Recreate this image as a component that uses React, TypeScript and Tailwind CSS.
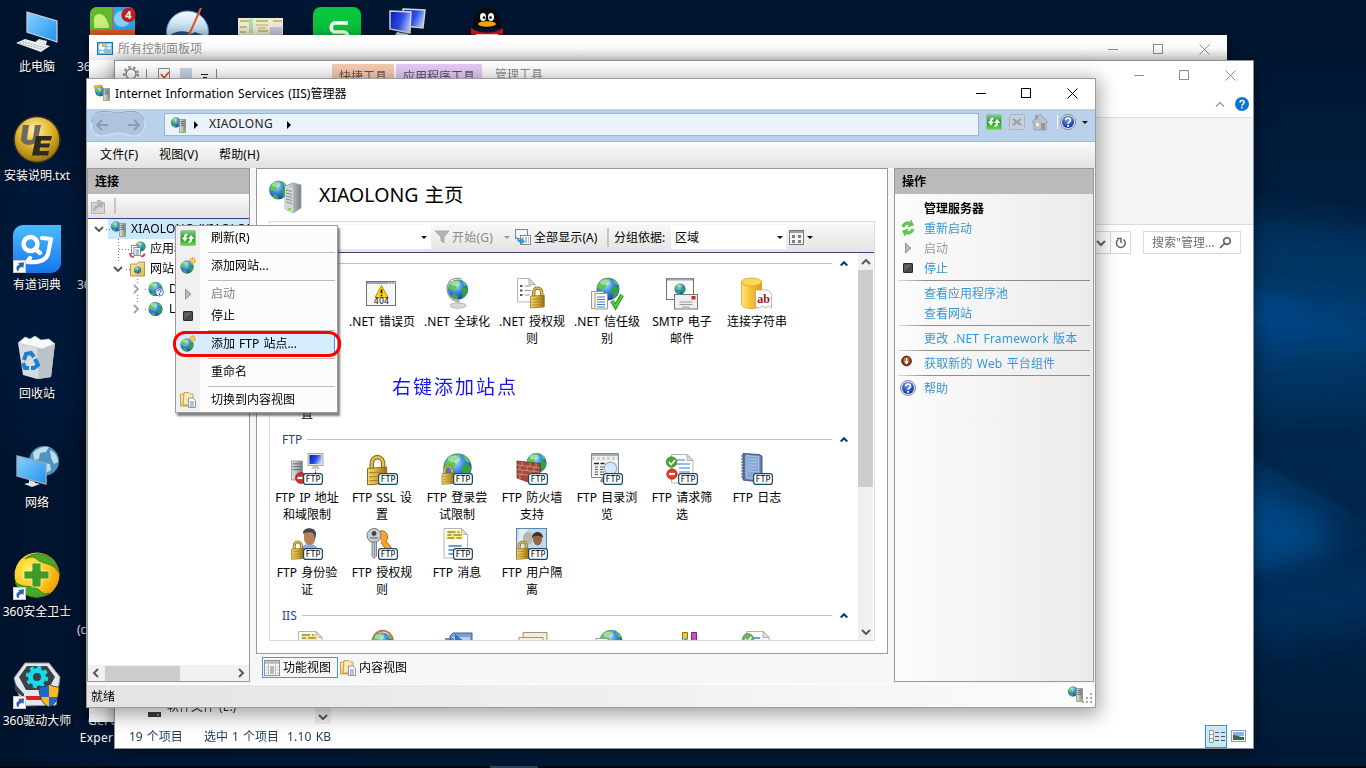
import type { ReactNode } from "react";

type Kids = { children?: ReactNode };

/* ---------- shared gradients ---------- */
function Defs() {
  return (
    <svg className="absolute" width="0" height="0">
      <defs>
        <radialGradient id="sea" cx="0.4" cy="0.3" r="0.75">
          <stop offset="0" stopColor="#b4e2ff" />
          <stop offset="0.45" stopColor="#3b8ce0" />
          <stop offset="1" stopColor="#0f3a9c" />
        </radialGradient>
        <linearGradient id="steel" x1="0" x2="1">
          <stop offset="0" stopColor="#e4e6e8" />
          <stop offset="0.5" stopColor="#b4b8bc" />
          <stop offset="1" stopColor="#7d8287" />
        </linearGradient>
        <linearGradient id="gold" x1="0" x2="1">
          <stop offset="0" stopColor="#f5dc7c" />
          <stop offset="0.5" stopColor="#d8ac3a" />
          <stop offset="1" stopColor="#8f6a14" />
        </linearGradient>
        <linearGradient id="amber" x1="0" x2="1">
          <stop offset="0" stopColor="#ffe07a" />
          <stop offset="0.5" stopColor="#f8c02c" />
          <stop offset="1" stopColor="#e89a10" />
        </linearGradient>
        <linearGradient id="screen" x1="0" x2="1" y1="0" y2="1">
          <stop offset="0" stopColor="#8ad0ff" />
          <stop offset="1" stopColor="#1f93ee" />
        </linearGradient>
        <linearGradient id="deep" x1="0" x2="1" y1="0.3" y2="0.7">
          <stop offset="0" stopColor="#0c1fc0" />
          <stop offset="0.5" stopColor="#2b4fe6" />
          <stop offset="1" stopColor="#c3d6ff" />
        </linearGradient>
        <linearGradient id="refreshGreen" x1="0" x2="0" y1="0" y2="1">
          <stop offset="0" stopColor="#7fd88a" />
          <stop offset="0.5" stopColor="#1c9a2c" />
          <stop offset="1" stopColor="#5fe03c" />
        </linearGradient>
        <radialGradient id="help" cx="0.45" cy="0.3" r="0.7">
          <stop offset="0" stopColor="#6f9af5" />
          <stop offset="1" stopColor="#122f9c" />
        </radialGradient>
        <linearGradient id="folder" x1="0" x2="1" y1="0" y2="1">
          <stop offset="0" stopColor="#fff0b8" />
          <stop offset="1" stopColor="#e2b553" />
        </linearGradient>
        <radialGradient id="ue" cx="0.45" cy="0.3" r="0.75">
          <stop offset="0" stopColor="#fff3a0" />
          <stop offset="0.5" stopColor="#e0b428" />
          <stop offset="1" stopColor="#8a6408" />
        </radialGradient>
        <linearGradient id="dict" x1="0" x2="0" y1="0" y2="1">
          <stop offset="0" stopColor="#49bdfb" />
          <stop offset="1" stopColor="#1974ee" />
        </linearGradient>
        <radialGradient id="guard" cx="0.35" cy="0.4" r="0.7">
          <stop offset="0" stopColor="#fff36a" />
          <stop offset="0.6" stopColor="#fcc518" />
          <stop offset="1" stopColor="#ef9a08" />
        </radialGradient>
        <linearGradient id="bird" x1="0" x2="0" y1="0" y2="1">
          <stop offset="0" stopColor="#f4fbff" />
          <stop offset="1" stopColor="#7fb5e0" />
        </linearGradient>
        <filter id="soft" x="-50%" y="-50%" width="200%" height="200%">
          <feGaussianBlur stdDeviation="16" />
        </filter>
      </defs>
    </svg>
  );
}

/* ---------- drawing parts ---------- */
function Globe({ x, y, r }: { x: number; y: number; r: number }) {
  return (
    <g transform={`translate(${x} ${y}) scale(${r / 10})`}>
      <circle r="10" fill="url(#sea)" />
      <path d="M-7-6.5C-4-9.5 1-10 2-9 3-7-1-6-2-4 0-2-3-1-4 1-6 0-8 1-9.300-1-9.500-3-8.500-5.500-7-6.500z" fill="#5cc84f" />
      <path d="M4.500-2C6-3 9-2 9.800 0 9.500 4 7 7.500 4.500 8.800 3 7 6 5 4 3.500 3 2 3 0 4.500-2z" fill="#2fa53a" />
      <path d="M-5 5C-2 4 0 6 0 9.800-3 10-6 8-7 6.500z" fill="#3fae3c" />
      <path d="M4-9C7-8 9-5 9.500-3.500 7-3 5-5 4-9z" fill="#63c654" />
      <ellipse cx="-2.500" cy="-6" rx="4.500" ry="2.500" fill="#fff" opacity="0.4" />
      <circle r="9.800" fill="none" stroke="#3f6ea8" strokeWidth="0.500" opacity="0.6" />
    </g>
  );
}
function Tower({ x, y, w, h }: { x: number; y: number; w: number; h: number }) {
  return (
    <g>
      <rect x={x} y={y} width={w} height={h} fill="url(#steel)" stroke="#85898d" strokeWidth="0.700" />
      <path d={`M${x + 1} ${y + h * 0.15}h${w - 2}M${x + 1} ${y + h * 0.3}h${w - 2}M${x + 1} ${y + h * 0.45}h${w - 2}`} stroke="#5d6165" strokeWidth="0.900" />
      <rect x={x + w * 0.6} y={y + h * 0.8} width="2" height="2" fill="#7be000" />
    </g>
  );
}
function Lock({ x, y, s = 1 }: { x: number; y: number; s?: number }) {
  return (
    <g transform={`translate(${x} ${y}) scale(${s})`}>
      <path d="M3 10V6a4 4.500 0 0 1 8 0v4" fill="none" stroke="#8d6c1c" strokeWidth="3.200" />
      <path d="M3 10V6a4 4.500 0 0 1 8 0v4" fill="none" stroke="#e2c05a" strokeWidth="1.600" />
      <path d="M0 9.500 13.500 8.500V20L0 21z" fill="url(#gold)" stroke="#8a6818" strokeWidth="0.700" />
      <path d="M1 12.500 13 11.800M1 15.500 13 14.800M1 18.200 13 17.500" stroke="#a37c1e" strokeWidth="0.700" />
    </g>
  );
}
function Page({ x, y, w, h, children }: { x: number; y: number; w: number; h: number } & Kids) {
  return (
    <g transform={`translate(${x} ${y})`}>
      <path d={`M.5.5H${w - 6}L${w} 6.500V${h}H.5z`} fill="#fdfdfd" stroke="#b5b5b5" />
      <path d={`M${w - 6} .5V6.500H${w}z`} fill="#dcdcdc" stroke="#a5a5a5" strokeWidth="0.800" />
      {children}
    </g>
  );
}
function Ftp() {
  return (
    <g>
      <rect x="12.600" y="20.600" width="18.800" height="10.800" rx="2.500" fill="#fff" stroke="#1d4864" strokeWidth="1.200" />
      <text x="22.200" y="29" fontSize="8" textAnchor="middle" fontFamily="DejaVu Sans, sans-serif" fill="#000" letterSpacing="0.300" wordSpacing="0">FTP</text>
    </g>
  );
}
function Svg32({ children }: Kids) {
  return <svg width="32" height="32" viewBox="0 0 32 32" className="block shrink-0 overflow-visible">{children}</svg>;
}
function Svg16({ children, className = "" }: Kids & { className?: string }) {
  return <svg width="16" height="16" viewBox="0 0 16 16" className={`block shrink-0 overflow-visible ${className}`}>{children}</svg>;
}

/* ---------- 16px icons ---------- */
const ServerIcon = ({ className = "" }: { className?: string }) => (
  <Svg16 className={className}><Globe x={5} y={5.500} r={5} /><Tower x={8.500} y={2.500} w={6} h={13} /></Svg16>
);
const TitleIcon = () => (
  <Svg16>
    <path d="M0 1 8 0 9 4 3 10z" fill="#f0b428" stroke="#b57c10" strokeWidth="0.500" />
    <Globe x={6} y={6.500} r={4.800} /><Tower x={9.500} y={3.500} w={6} h={12} />
  </Svg16>
);
const RefreshIcon = ({ className = "" }: { className?: string }) => (
  <Svg16 className={className}>
    <rect x="0.500" y="0.500" width="15" height="15" rx="1" fill="url(#refreshGreen)" stroke="#a9b8a2" />
    <path d="M7.500 3.500C5 3.500 3.800 5 3.800 7.500H1.500L5 11.500 8 7.500H6C6 6 6.500 5.500 7.500 5.500zM8.500 13C11 13 12.200 11.500 12.200 9h2.300L11 5 8 9h2c0 1.500-.5 2-1.500 2z" fill="#fff" />
  </Svg16>
);
const HelpIcon = () => (
  <Svg16>
    <circle cx="8" cy="8" r="7.600" fill="#d6d9df" stroke="#7d8084" strokeWidth="0.800" />
    <circle cx="8" cy="8" r="6" fill="url(#help)" />
    <path d="M5.700 6.200C5.700 3.300 10.500 3.300 10.500 6.100 10.500 7.800 8.100 7.900 8.100 9.800" fill="none" stroke="#fff" strokeWidth="1.700" />
    <rect x="7.200" y="11" width="1.800" height="1.800" fill="#fff" />
  </Svg16>
);
const GlobeStarIcon = () => (
  <Svg16>
    <Globe x={7} y={9} r={6.500} />
    <path d="M12.500-1v7.500M9 2.800h7M10 .2l5 5M15 .2l-5 5" stroke="#eda32a" strokeWidth="1.200" />
    <circle cx="12.500" cy="2.800" r="1.500" fill="#ffd36a" />
  </Svg16>
);
const PlayIcon = () => (
  <Svg16><path d="M5.500 3 11 8.200 5.500 13z" fill="#b9b9b9" stroke="#8d8d8d" strokeWidth="0.900" /></Svg16>
);
const StopIcon = () => (
  <Svg16><rect x="3.500" y="3.500" width="9" height="9" rx="0.500" fill="#4a4a4a" stroke="#2a2a2a" /><path d="M4.500 11.500V4.500H11.500z" fill="#7c7c7c" opacity="0.5" /></Svg16>
);
const FolderPagesIcon = () => (
  <Svg16>
    <path d="M.5 2h4l1 1.500H10V14H.5z" fill="url(#folder)" stroke="#b78a34" strokeWidth="0.800" />
    <path d="M4 .6h5l1.500 1.500h2.500V10L10 13H3z" fill="#fbe9b4" stroke="#b78a34" strokeWidth="0.800" />
    <path d="M8.500 6h4.500l2.500 2.500V15.500h-7z" fill="#fff" stroke="#7f8b99" strokeWidth="0.900" />
    <path d="M10 10h4M10 12h4M10 14h4" stroke="#3f7dc1" strokeWidth="0.900" />
  </Svg16>
);
const FeatureIcon = () => (
  <Svg16>
    <rect x="0.500" y="0.500" width="15" height="15" fill="#fafafa" stroke="#8f8f8f" />
    <path d="M1 2.500h14" stroke="#aab2bb" strokeWidth="2.400" />
    <path d="M4.500 4v12M11.500 4v12" stroke="#b6b6b6" />
    <path d="M6 7h4M6 9h4M6 11h4M6 13h4" stroke="#666" strokeWidth="0.900" />
    <path d="M2 7h1.500M2 10h1.500M2 13h1.500M13 7h1.500M13 10h1.500M13 13h1.500" stroke="#aaa" />
  </Svg16>
);
const AppPoolIcon = () => (
  <Svg16>
    <Globe x={10.500} y={5.500} r={5} />
    <rect x="1.500" y="4.500" width="6" height="8" fill="#fff" stroke="#777" strokeWidth="0.800" />
    <rect x="4" y="6.500" width="6.500" height="8" fill="#fff" stroke="#777" strokeWidth="0.800" />
    <path d="M5.500 9h3.500M5.500 11h3.500M5.500 13h3.500" stroke="#3f7dc1" strokeWidth="0.900" />
    <path d="M0 12c0 3 2 4 4 4M11 15.500c2 0 3.500-1 3.500-3" stroke="#c93a32" strokeWidth="1.700" fill="none" />
  </Svg16>
);
const SitesIcon = () => (
  <Svg16>
    <path d="M.5 3h7l1-2h6v14H.5z" fill="url(#folder)" stroke="#b98d35" strokeWidth="0.900" />
    <Globe x={7.500} y={9} r={3.500} />
  </Svg16>
);

/* ---------- 32px feature icons ---------- */
const IcError404 = () => (
  <Svg32>
    <rect x="0.500" y="4.500" width="29" height="24" fill="#f7f7f7" stroke="#6f7379" />
    <path d="M1 6h28" stroke="#9aa6b4" strokeWidth="2" />
    <path d="M22 6h1.500M25 6h1.500M28 6h1.500" stroke="#fff" />
    <path d="M15.500 8.500 22 20.500H9z" fill="#ffd21e" stroke="#b98b00" />
    <path d="M15.500 12.500v4M15.500 17.700v1.600" stroke="#222" strokeWidth="1.700" />
    <text x="15.500" y="27.300" fontSize="8" textAnchor="middle" fontFamily="DejaVu Sans, sans-serif" fill="#111">404</text>
  </Svg32>
);
const IcGlobeStand = () => (
  <Svg32>
    <ellipse cx="17" cy="28.500" rx="8" ry="2.800" fill="#d5d8db" stroke="#9ca1a6" strokeWidth="0.700" />
    <path d="M16 23h3v4h-3z" fill="#c0c4c8" />
    <path d="M10 3C3 10 6 22 17 24.500" fill="none" stroke="#9aa0a5" strokeWidth="1.600" />
    <path d="M10 3C13 1 19 1 21 2" fill="none" stroke="#9aa0a5" strokeWidth="1.300" />
    <Globe x={17} y={12.500} r={10} />
  </Svg32>
);
const IcAuthRules = () => (
  <Svg32>
    <Page x={1} y={1} w={18} h={24} />
    <path d="M4 9h2.500M4 13.500h2.500M4 18h2.500" stroke="#555" strokeWidth="2.200" />
    <path d="M8.500 9h6.500M8.500 13.500h6.500M8.500 18h5" stroke="#999" />
    <Lock x={14.500} y={9.500} s={1.020} />
  </Svg32>
);
const IcTrust = () => (
  <Svg32>
    <Globe x={17} y={12} r={11.300} />
    <path d="M.5 14.500h12v17H.5z" fill="#fdf6d6" stroke="#999" />
    <path d="M4 16.500h12.500v15.500H4z" fill="#fff" stroke="#999" />
    <path d="M6 20h8M6 22.500h8M6 25h8M6 27.500h8M6 30h8" stroke="#3b7fc4" />
    <path d="M21 24l3.500 5.500L31 18" fill="none" stroke="#1f8a17" strokeWidth="4" />
    <path d="M21 24l3.500 5.500L31 18" fill="none" stroke="#58cf37" strokeWidth="2.200" />
  </Svg32>
);
const IcSmtp = () => (
  <Svg32>
    <rect x="0.500" y="1.500" width="27" height="21" fill="#fbfbfb" stroke="#6f7379" />
    <path d="M1 2.500h26" stroke="#9aa6b4" strokeWidth="2" />
    <Globe x={14} y={12} r={5.500} />
    <rect x="8.500" y="17.500" width="23" height="14.500" fill="#efefef" stroke="#777" />
    <path d="M13.500 25h13M13.500 27.500h13M16 30h8" stroke="#9a9a9a" />
    <rect x="25.500" y="19" width="4" height="3.500" fill="#d2281e" />
  </Svg32>
);
const IcConn = () => (
  <Svg32>
    <path d="M.5 5v22c0 3 4 4.500 10 4.500S20.500 30 20.500 27V5z" fill="url(#amber)" stroke="#d99a1c" strokeWidth="0.700" />
    <ellipse cx="10.500" cy="5" rx="10" ry="4" fill="#ffd95c" stroke="#dc9c1c" strokeWidth="0.800" />
    <path d="M14.500 13h12l4 4v14l-3-2-3 2-3-2-3 2-4-1z" fill="#fdfdfd" stroke="#aaa" strokeWidth="0.800" />
    <text x="22.500" y="26" fontSize="12" fontWeight="700" textAnchor="middle" fontFamily="Liberation Serif, serif" fill="#a0141e">ab</text>
  </Svg32>
);
const IcFtpIp = () => (
  <Svg32>
    <Tower x={0.500} y={8} w={11} h={19} />
    <rect x="17" y="0.500" width="15" height="12" fill="#e6e6e2" stroke="#a9a9a0" />
    <rect x="18.500" y="2" width="12" height="9" fill="url(#deep)" />
    <path d="M22 13h5l2 3h-9z" fill="#c9c9c4" />
    <path d="M24.500 17v4" stroke="#333" strokeDasharray="1 1" />
    <circle cx="10" cy="25" r="5.500" fill="#d0312d" stroke="#8f1512" strokeWidth="0.600" /><path d="M6.500 25h5" stroke="#fff" strokeWidth="2.200" />
    <Ftp />
  </Svg32>
);
const IcFtpSsl = () => (<Svg32><Lock x={1.500} y={2} s={1.420} /><Ftp /></Svg32>);
const IcFtpLogon = () => (<Svg32><Globe x={16.500} y={14.500} r={14} /><Lock x={1} y={12} s={0.920} /><Ftp /></Svg32>);
const IcFtpFirewall = () => (
  <Svg32>
    <Globe x={20.500} y={10} r={10} />
    <path d="M1 8 24 10.500V27l-9 3L1 25z" fill="#a44a38" stroke="#6e2a1e" strokeWidth="0.800" />
    <path d="M1 12l23 3M1 16.500l23 2.500M1 21l23 2M6 8.500v4M14 9.500v4M20 10v4.500M4 12.500v4M11 13.500v4M18 14v4.500M6 17v4.500M14 18v4.500M4 21.500V26" stroke="#d79a86" strokeWidth="0.800" />
    <Ftp />
  </Svg32>
);
const IcFtpBrowse = () => (
  <Svg32>
    <path d="M.5.500h27v24H.5z" fill="#f4f4f2" stroke="#85898d" />
    <path d="M1 2h26" stroke="#a3adb8" strokeWidth="2.200" /><path d="M1 5.500h26" stroke="#cfd1ce" strokeWidth="3" strokeDasharray="3 2" />
    <path d="M3 10.500h5M9.500 10.500h4" stroke="#222" strokeWidth="1.500" />
    <path d="M4 14h3M9 14h4M4 16.500h3M9 16.500h3M4 19h3M9 19h4M4 21.500h3M9 21.500h4" stroke="#555" />
    <circle cx="19.500" cy="15.500" r="6.300" fill="#d4e8fc" stroke="#a3b0bc" strokeWidth="1.300" />
    <path d="M10 29l4-6" stroke="#888" strokeWidth="3" /><Ftp />
  </Svg32>
);
const IcFtpFilter = () => (
  <Svg32>
    <Page x={5} y={1} w={22} h={29} />
    <path d="M10 7h9M10 11h14M13 15h11M13 19h11" stroke="#3b7fc4" strokeWidth="1.200" />
    <circle cx="5.500" cy="9" r="5.300" fill="#4aa53a" stroke="#2b7a20" strokeWidth="0.600" /><path d="M3 9l2 2.500 4-4.500" stroke="#fff" strokeWidth="1.600" fill="none" />
    <circle cx="6" cy="21" r="5.300" fill="#e03c22" stroke="#a32010" strokeWidth="0.600" /><path d="M3 21h6" stroke="#fff" strokeWidth="2.200" />
    <Ftp />
  </Svg32>
);
const IcFtpLog = () => (
  <Svg32>
    <path d="M2 .5 18 1.500 21 3V26L18 29 2 27z" fill="#5d7fae" stroke="#3e5c87" />
    <path d="M5 2.500 18 3.500V27L5 25z" fill="#88a9d6" stroke="#c7d7ec" strokeWidth="0.700" />
    <path d="M7 6l9 .5M7 9l9 .5M7 12l9 .5M7 15l9 .5M7 18l9 .5" stroke="#a9c3e6" />
    <path d="M0 3h4M0 6h4M0 9h4M0 12h4M0 15h4M0 18h4M0 21h4M0 24h4" stroke="#4a5a70" strokeWidth="1.100" />
    <Ftp />
  </Svg32>
);
const IcFtpAuth = () => (
  <Svg32>
    <path d="M9 27c0-8 4-11 9-11s10 3 10 9v3z" fill="#7fb0e6" />
    <path d="M13 6c0-7 11-7 11 0v5c0 8-10 8-11 0z" fill="#b98256" /><path d="M12 6C11-1 24-2 25 5c0 3-1 7-1.500 6 0-3-.5-6-3-6.500C17 4 13 5 12 6z" fill="#46474a" />
    <Lock x={0.500} y={12.500} s={0.900} /><Ftp />
  </Svg32>
);
const IcFtpKeys = () => (
  <Svg32>
    <path d="M14 3c6-2 10 6 6 10l7 9-4 3-8-10" fill="#f5a52c" stroke="#b86a08" />
    <circle cx="8" cy="7.500" r="7" fill="#c9ced6" stroke="#6f7681" /><circle cx="8" cy="5.500" r="2.400" fill="#3f464f" /><path d="M4 10h8" stroke="#7d8590" strokeWidth="1.500" />
    <path d="M6 14h4.500V28L8 30.500 6 28z" fill="#c3c9d1" stroke="#6f7681" strokeWidth="0.900" /><path d="M8.500 15v13" stroke="#858c96" />
    <Ftp />
  </Svg32>
);
const NoteLines = () => (
  <g><path d="M3 4h14M3 7h17M3 10h17" stroke="#fff27a" strokeWidth="3" /><path d="M4 4h8M14 4h2M4 7h4M10 7h8M4 10h7M13 10h5" stroke="#555" strokeWidth="1.100" /></g>
);
const IcFtpMsg = () => (
  <Svg32>
    <Page x={2.500} y={0} w={24} h={30}><NoteLines /><path d="M5 18h13M5 22h5M5 26h5" stroke="#3b7fc4" strokeWidth="1.300" /></Page>
    <Ftp />
  </Svg32>
);
const IcFtpUser = () => (
  <Svg32>
    <rect x="0.500" y="0.500" width="30" height="29" fill="#bcd9f1" stroke="#5d89b0" />
    <path d="M3 1h9L4 29H1z" fill="#e6f3fd" opacity="0.800" />
    <path d="M5 27c0-8 14-8 14 0z" fill="#86b3d3" /><ellipse cx="12" cy="10" rx="5" ry="6.500" fill="#b9b4ac" />
    <path d="M13 29c0-10 17-10 17 0z" fill="#4a8cc4" /><ellipse cx="21.500" cy="11" rx="4.500" ry="6.500" fill="#9c6440" /><path d="M16 10c0-8 11-8 11 0-3-3-8-3-11 0z" fill="#3a3532" />
    <Lock x={0.500} y={12.500} s={0.900} /><Ftp />
  </Svg32>
);
const IcIis1 = () => (<Svg32><Page x={7} y={2} w={24} h={30}><NoteLines /></Page></Svg32>);
const IcIis2 = () => (<Svg32><path d="M6 14C7-2 26-2 27 12" stroke="#d8684a" strokeWidth="2" fill="none" /><Globe x={16} y={14} r={10.500} /></Svg32>);
const IcIis3 = () => (
  <Svg32><path d="M9 7l3-3h19v18H9z" fill="#7a9fd2" stroke="#42608c" /><path d="M11 8h18v14H11z" fill="#b9d3f2" /><path d="M4 10h9M6 13h7" stroke="#3b6fb4" strokeWidth="1.500" /><path d="M14 5l10 8-10 8z" fill="#2f6fd0" /></Svg32>
);
const IcIis4 = () => (
  <Svg32><path d="M7 3.500h24v20H7z" fill="#f3ecdc" stroke="#a3927a" /><path d="M3 8.500h24v20H3z" fill="#f6f0e2" stroke="#a3927a" /><path d="M6 11.500h18v14H6z" fill="#fff" stroke="#c4b59c" /></Svg32>
);
const IcIis5 = () => (<Svg32><Globe x={20} y={12.500} r={11.500} /><path d="M5 9.500h12v16H5z" fill="#fff" stroke="#999" /></Svg32>);
const IcIis6 = () => (
  <Svg32><path d="M16.500 3.500h5v20h-5z" fill="#efc52c" stroke="#98780c" /><path d="M25.500 3.500h5v20h-5z" fill="#c44fc9" stroke="#7a2480" /><path d="M18 7l6 6h-6z" fill="#2aa0d8" stroke="#fff" strokeWidth="0.500" /></Svg32>
);
const IcIis7 = () => (
  <Svg32><Page x={5} y={2} w={23} h={29} /><path d="M10 9h9" stroke="#3b7fc4" strokeWidth="1.500" /><circle cx="7" cy="10" r="5.500" fill="#6db85e" stroke="#2b7a20" strokeWidth="0.600" /><path d="M4 10l2.500 2.500 4-4.500" stroke="#fff" strokeWidth="1.600" fill="none" /></Svg32>
);

/* ---------- desktop ---------- */
function Shortcut() {
  return (
    <g transform="translate(0 34)">
      <rect x="0.500" y="0.500" width="12" height="12" fill="#fff" stroke="#c9c9c9" />
      <path d="M4.500 11C2.500 8 3.500 5 6.500 4.700L5 3l6-.8L10.500 8 9 6.800C6.500 7.500 5.500 9 5.800 11z" fill="#2b63ae" />
    </g>
  );
}
function DesktopIcon({ label, children }: { label: string } & Kids) {
  return (
    <div className="flex h-[109px] w-[74px] flex-col items-center">
      <svg width="48" height="48" viewBox="0 0 48 48" className="block shrink-0 overflow-visible">{children}</svg>
      <div className="mt-[2px] whitespace-nowrap leading-[17px] text-white [text-shadow:1px_1px_2px_#000]">{label}</div>
    </div>
  );
}
function Desktop() {
  return (
    <>
      <svg className="absolute left-0 top-0" width="1366" height="768">
        <defs>
          <linearGradient id="night" x1="0" x2="0" y1="0" y2="1">
            <stop offset="0" stopColor="#00142d" /><stop offset="0.180" stopColor="#001b3a" /><stop offset="0.500" stopColor="#002a50" /><stop offset="0.800" stopColor="#002448" /><stop offset="1" stopColor="#001834" />
          </linearGradient>
          <linearGradient id="leftFade" x1="0" x2="1" y1="0" y2="0">
            <stop offset="0" stopColor="#00132c" /><stop offset="0.300" stopColor="#001736" /><stop offset="1" stopColor="#001736" stopOpacity="0" />
          </linearGradient>
          <linearGradient id="beam" x1="0" x2="1"><stop offset="0" stopColor="#0055a0" /><stop offset="1" stopColor="#003562" /></linearGradient>
        </defs>
        <rect width="1366" height="768" fill="url(#night)" />
        <rect width="500" height="768" fill="url(#leftFade)" />
        <ellipse cx="40" cy="300" rx="60" ry="150" fill="#002350" opacity="0.350" filter="url(#soft)" />
        <g filter="url(#soft)">
          <path d="M1200 215 1400 235V400L1200 410z" fill="#003462" />
          <path d="M1200 285 1400 315V345L1200 355z" fill="#00468a" opacity="0.800" />
          <path d="M1200 465 1330 520V550L1200 580z" fill="#004684" />
          <path d="M1200 590 1400 555V620L1200 650z" fill="#002f5c" />
        </g>
        <path d="M1253 288 1366 316V335L1253 325z" fill="url(#beam)" opacity="0.250" />
        <path d="M1253 572 1366 546V520L1253 460z" fill="url(#beam)" opacity="0.200" />
        <path d="M1253 433H1366" stroke="#00264a" strokeWidth="3" opacity="0.500" />
        <rect y="766" width="1366" height="2" fill="#04060a" /><rect x="490" y="766" width="48" height="2" fill="#3a4048" />
      </svg>
      <div className="absolute left-0 top-[8px] flex flex-col">
        <DesktopIcon label="此电脑">
          <path d="M14 4 44 13V34L14 24z" fill="url(#screen)" stroke="#c9d6df" strokeWidth="1.200" /><path d="M26 31l8 2-1 4-12-2z" fill="#dfe5e9" /><path d="M3 35l9-4 25 7-9 6z" fill="#e9edf0" /><path d="M6 35l24 6.500M9 33.500l24 6.500" stroke="#8f9aa3" strokeWidth="0.800" strokeDasharray="2 1" />
        </DesktopIcon>
        <DesktopIcon label="安装说明.txt">
          <circle cx="24" cy="22.500" r="23" fill="url(#ue)" stroke="#2f2d28" strokeWidth="1.600" />
          <path d="M10 8l6 0-2 13c0 3 5 3 6 0L22 8h6l-3 14c-2 8-18 8-17-1z" fill="#6d6a60" /><path d="M23 19h16l-1 4.500H28l-.5 3H37l-1 4H27l-.5 3.500H36l-1 4.500H19z" fill="#2c2a22" />
        </DesktopIcon>
        <DesktopIcon label="有道词典">
          <path d="M10-1H48V37a10 10 0 0 1-10 10H0V9A10 10 0 0 1 10-1z" fill="url(#dict)" />
          <circle cx="17.500" cy="18" r="7" fill="none" stroke="#fff" strokeWidth="4.500" /><path d="M22 23l5 4M29 12l9 1-3 15c-2 6-8 9-21 8l3-4" fill="none" stroke="#fff" strokeWidth="4.200" strokeLinejoin="round" strokeLinecap="round" /><Shortcut />
        </DesktopIcon>
        <DesktopIcon label="回收站">
          <path d="M5 8 42 8 38 42 24 44 10 40z" fill="#e3e6e9" opacity="0.950" /><path d="M24 12 42 8 38 42 26 44z" fill="#bcc4ca" /><path d="M5 8l7-6 5 2 5-3 6 4 8-1 6 5-13 5z" fill="#f7f9fa" stroke="#b8c0c5" strokeWidth="0.700" />
          <g fill="none" stroke="#1c7fd0" strokeWidth="4"><path d="M11 25l2-6 5-1 3 4" /><path d="M22 24l3 6-4 3h-3" /><path d="M16 33h-4l-2-5" /></g>
        </DesktopIcon>
        <DesktopIcon label="网络">
          <circle cx="31" cy="17" r="15" fill="#4c96bd" /><path d="M20 9c5-6 12-7 16-6l-3 5-6 1-1 6-5 1zM37 6c5 2 8 7 8 12l-4 2-3-6zM31 19l6 1 1 6-5 3z" fill="#cfeaf4" opacity="0.850" />
          <path d="M4 12 33 19V40L4 32z" fill="url(#screen)" stroke="#8fa9bd" strokeWidth="1.500" /><path d="M16 36l6 2v3h-6zM11 40l8-2 8 2-8 3z" fill="#dfe5e9" />
        </DesktopIcon>
        <DesktopIcon label="360安全卫士">
          <circle cx="24" cy="22" r="22.500" fill="url(#guard)" /><path d="M12 6C22-4 42 0 46 20 40 8 28 12 24 6 20 3 16 4 12 6zM36 40C24 49 7 43 2 29 12 37 20 30 27 38c3 3 6 3 9 2z" fill="#47a82a" stroke="#2d7d18" strokeWidth="0.800" />
          <path d="M19 10h9v8h8v8h-8v8h-9v-8h-8v-8h8z" fill="#3f9a28" stroke="#fff2a0" strokeWidth="0.800" /><Shortcut />
        </DesktopIcon>
        <DesktopIcon label="360驱动大师">
          <path d="M12 1H36L47 15 43 43 9 44 1 16z" fill="#e3e6ea" stroke="#8b939b" /><path d="M14 4H34L42 15 35 28H13L6 15z" fill="#3b4148" /><path d="M2 22l9 10v4L2 28z" fill="#3b4148" /><path d="M12 34H30V38H14z" fill="#d42226" />
          <circle cx="24" cy="15" r="6.500" fill="none" stroke="#19dbe8" strokeWidth="5" /><circle cx="24" cy="15" r="9.800" fill="none" stroke="#19dbe8" strokeWidth="3" strokeDasharray="4 3.700" />
          <path d="M36 22c-2 1.500-5 3-10 3 0 4 .5 7 1.500 10H36z" fill="#1f67c8" /><path d="M36 22c3 2 6 3 10 3 0 4-.5 7-1.500 10H36z" fill="#f8b91f" /><path d="M36 35h-8.500c1.500 5 5 8 8.500 10z" fill="#f8b91f" /><path d="M36 35h8.500c-1.500 5-4.500 8-8.500 10z" fill="#1f67c8" />
          <path d="M36 22c-2 1.500-5 3-10 3 0 10 3 17 10 20 7-3 10-10 10-20-4 0-7-1-10-3z" fill="none" stroke="#2a2d31" strokeWidth="0.800" /><Shortcut />
        </DesktopIcon>
      </div>
      <svg className="absolute left-[80px] top-0" width="440" height="40">
        <rect x="10" y="7" width="45" height="40" rx="7" fill="#e05a28" /><path d="M10 30V14a7 7 0 0 1 7-7h15v23z" fill="#62b92e" /><path d="M33 7h15a7 7 0 0 1 7 7v16H33z" fill="#2fa2e8" />
        <path d="M14 28V20c0-4 2-6 6-6 4 1 8 5 9 14z" fill="#c9f07c" /><circle cx="42" cy="19" r="8" fill="#83d2fa" />
        <circle cx="48.500" cy="15" r="7.200" fill="#c41c1c" /><text x="48.500" y="19" fontSize="11" fontWeight="700" textAnchor="middle" fill="#fff" fontFamily="Noto Sans, sans-serif">4</text>
        <circle cx="107.500" cy="32" r="21" fill="url(#bird)" stroke="#5e93c4" /><path d="M89 36c6-6 18-6 22-2l4-2 8 3v7H88z" fill="#235184" /><path d="M121 8 108 37" stroke="#e05c2c" strokeWidth="2" />
        <rect x="158" y="18" width="45" height="22" fill="#efecd6" /><path d="M160 21h12M160 27h7M176 21h12M193 21h9M160 32h6M178 31h10" stroke="#cdbb78" strokeWidth="2" /><rect x="169" y="19" width="4" height="14" fill="#b7dcab" /><path d="M176 25h12M178 28h8" stroke="#d8cc98" strokeWidth="2" /><path d="M190 27h12v8h-12z" fill="#c9c5e0" />
        <rect x="233" y="7" width="48" height="48" rx="8" fill="#08c63e" /><path d="M268 23H254a5 5 0 0 0 0 9h10a5 5 0 0 1 3 8" stroke="#fff" strokeWidth="3.500" fill="none" />
        <g stroke="#d5d6d0" strokeWidth="1.500"><path d="M323 9l22 1-2 18-19-2z" fill="url(#deep)" /><path d="M310 11l21 1-1 21-20-4z" fill="url(#deep)" /></g><path d="M317 32l11 2 4 6h-20z" fill="#d5d6d0" />
        <path d="M393 28c-1-28 28-28 28 0z" fill="#0b0b0d" /><ellipse cx="403" cy="17" rx="3" ry="4" fill="#fff" /><ellipse cx="411" cy="17" rx="3" ry="4" fill="#fff" /><circle cx="404" cy="17.500" r="1.300" /><circle cx="410.500" cy="17.500" r="1.300" /><ellipse cx="407" cy="24" rx="9" ry="2.800" fill="#f6a80a" /><path d="M391 28c8 6 24 6 32 0v6c-8 3-24 3-32 0z" fill="#dc1414" /><path d="M396 34h22v6h-22z" fill="#fff" />
      </svg>
      <div className="absolute left-[77px] top-[58px] whitespace-nowrap leading-[17px] text-white">360安全浏览器</div>
      <div className="absolute left-[77px] top-[276px] whitespace-nowrap leading-[17px] text-white">360压缩</div>
      <div className="absolute left-[77px] top-[621px] whitespace-nowrap leading-[17px] text-white">(c)</div>
      <div className="absolute left-[79px] top-[712px] w-[66px] whitespace-nowrap text-center leading-[17px] tracking-[0.25px] text-white">GeForce<br />Experience</div>
    </>
  );
}

function Caption({ color }: { color: string }) {
  return (
    <svg width="138" height="30" viewBox="0 0 138 30" className="block shrink-0" fill="none" stroke={color} shapeRendering="crispEdges">
      <path d="M19 14.500h10M64.500 9.500h9v9h-9z" />
      <path d="M110.500 9.500l10 10M120.500 9.500l-10 10" shapeRendering="auto" />
    </svg>
  );
}

/* ---------- background windows ---------- */
function PanelWindow() {
  return (
    <div className="absolute left-[89px] top-[35px] h-[687px] w-[1138px] bg-white shadow-[0_2px_14px_rgba(0,0,0,0.5)]">
      <div className="flex h-[25px] items-start justify-between bg-linear-to-b from-white from-50% to-[#ebebeb]">
        <div className="flex items-center gap-[5px] pl-2 pt-[5px]">
          <svg width="16" height="13" viewBox="0 0 16 13"><rect x="0.500" y="0.500" width="15" height="12" fill="#7cc8f2" stroke="#1d6fae" /><circle cx="5" cy="5" r="3" fill="#fff" /><path d="M5 5V2a3 3 0 0 1 3 3z" fill="#f4a81c" /><path d="M10 3h4M10 6h4M3 10h4" stroke="#fff" strokeWidth="1.500" /><path d="M9 10h4" stroke="#f4a81c" strokeWidth="1.500" /></svg>
          <span className="text-[#8b8b8b]">所有控制面板项</span>
        </div>
        <Caption color="#8e8e8e" />
      </div>
    </div>
  );
}
function ExplorerWindow() {
  return (
    <div className="absolute left-[114px] top-[60px] flex h-[689px] w-[1140px] flex-col border border-[#8d9299] bg-white shadow-[0_2px_16px_rgba(0,0,0,0.5)]">
      <div className="flex h-[29px] shrink-0 justify-between">
        <div className="flex items-start">
          <svg width="217" height="18" className="block"><g fill="none" stroke="#8a8a8a"><circle cx="16" cy="13" r="5" strokeWidth="1.500" /><circle cx="16" cy="13" r="7" strokeDasharray="2.500 2.500" strokeWidth="2" /><path d="M31.500 8v10M43.500 7.500h11v10h-11zM101.500 8v10" /></g><path d="M46 13l3 4 5-6" stroke="#d8501c" strokeWidth="1.600" fill="none" /><rect x="65" y="7" width="12" height="11" fill="#c5d3e8" /><path d="M86 13.500h7M88 16.500h4" stroke="#222" /></svg>
          <div className="mt-[3px] h-[25px] w-[62px] overflow-hidden bg-[#f8cbb2] pl-[7px] leading-[25px] text-[#6d5348]">快捷工具</div>
          <div className="ml-[2px] mt-[3px] h-[25px] w-[86px] overflow-hidden bg-[#e7cbf8] pl-[7px] leading-[25px] text-[#5d4b6c]">应用程序工具</div>
          <div className="ml-[13px] leading-[28px] text-[#8b8b8b]">管理工具</div>
        </div>
        <Caption color="#8e8e8e" />
      </div>
      <div className="flex h-[28px] shrink-0 items-center justify-end gap-[10px] border-b border-[#dcddde] pr-[4px]">
        <svg width="10" height="6" fill="none" stroke="#9a9a9a" strokeWidth="1.300"><path d="M1 5.500 5 1.500 9 5.500" /></svg>
        <svg width="14" height="14" viewBox="0 0 14 14"><circle cx="7" cy="7" r="7" fill="#0a74d4" /><path d="M5 5.400C5 2.900 9.200 2.900 9.200 5.300 9.200 6.900 7 6.900 7 8.700" fill="none" stroke="#fff" strokeWidth="1.500" /><rect x="6.200" y="9.800" width="1.600" height="1.600" fill="#fff" /></svg>
      </div>
      <div className="h-[107px] shrink-0 border-b border-[#dcddde] bg-[#f4f5f7]" />
      <div className="flex h-[35px] shrink-0 items-center justify-end pr-[12px]">
        <div className="flex h-[23px] w-[900px] items-center justify-end border border-[#d9d9d9]">
          <svg width="14" height="10" fill="none" stroke="#666" strokeWidth="2"><path d="M3 3 7 7 11 3" /></svg>
          <div className="ml-[2px] flex h-full w-[20px] items-center justify-center border-l border-[#d9d9d9]">
            <svg width="12" height="12" viewBox="0 0 12 12" fill="none" stroke="#666" strokeWidth="1.500"><path d="M8.500 2.500A4.400 4.400 0 1 1 3.200 2.500" /><path d="M2 1.500h4V6" /></svg>
          </div>
        </div>
        <div className="ml-[12px] flex h-[23px] w-[98px] items-center border border-[#d9d9d9] pl-[8px] text-[#6d6d6d]">
          <span className="w-[67px] whitespace-nowrap">搜索"管理...</span>
          <svg width="13" height="12" viewBox="0 0 13 12" fill="none" stroke="#666" strokeWidth="1.700"><circle cx="8" cy="4" r="3.300" /><path d="M5.500 6.500 1 11" /></svg>
        </div>
      </div>
      <div className="flex grow items-end">
        <div className="flex h-[20px] w-[217px] items-center justify-between">
          <div className="flex items-start"><svg width="14" height="6" className="ml-[33px] mt-[2px]"><rect width="13" height="5" fill="#3b3b3b" /><rect x="9" y="2" width="2" height="1.500" fill="#5fd42a" /></svg><div className="mt-[-12px] pl-[5px] text-[#333]">软件文件 (E:)</div></div>
          <div className="mr-[1px] flex h-[20px] w-[16px] items-center justify-center bg-[#f0f0f0] pt-[5px]"><svg width="10" height="6" fill="none" stroke="#555" strokeWidth="2"><path d="M1 1 5 5 9 1" /></svg></div>
        </div>
      </div>
      <div className="flex h-[24px] shrink-0 items-center whitespace-nowrap pl-[14px] text-[#1d3858]">
        <span className="w-[75px]">19 个项目</span><span className="w-[83px]">选中 1 个项目</span><span className="tracking-[0.15px]">1.10 KB</span>
        <div className="ml-auto flex items-center gap-[3px] pr-[7px]">
          <svg width="22" height="23"><rect x="0.500" y="0.500" width="21" height="22" fill="#cbe8f8" stroke="#269be0" /><path d="M4.500 5.500h4v12h-4zM4.500 9.500h4M4.500 13.500h4" fill="#fff" stroke="#999" /><path d="M10 7.500h4M16 7.500h4M10 11.500h4M16 11.500h4M10 15.500h4M16 15.500h4" stroke="#555" /></svg>
          <svg width="15" height="12" className="ml-[1px]"><rect x="0.500" y="0.500" width="14" height="11" fill="#fff" stroke="#999" /><rect x="2" y="2" width="11" height="4" fill="#7fb6f0" /><path d="M2 5c4 0 5 2 11 2v3H2z" fill="#38664f" /></svg>
        </div>
      </div>
    </div>
  );
}

/* ---------- IIS manager ---------- */
const Arrow = ({ dim = false }: { dim?: boolean }) => (
  <svg width="6" height="3" viewBox="0 0 6 3" className="block shrink-0"><path d="M0 0h6L3 3z" fill={dim ? "#999" : "#111"} /></svg>
);
const Chevron = ({ d, c = "#555" }: { d: string; c?: string }) => (
  <svg width="10" height="10" viewBox="0 0 10 10" className="block shrink-0" fill="none" stroke={c} strokeWidth="1.900"><path d={d} /></svg>
);

function NavBar() {
  return (
    <div className="flex h-[33px] shrink-0 items-start border-b border-[#a2b9d3] bg-[#b9d1ea]">
      <svg width="77" height="32" className="block shrink-0">
        <path d="M16 2.500C24 2 27 4 31 4s7-2 15-1.500C54 3 58 8 58 15s-4 12-11 12c-6 0-10-3-16-3s-10 3-16 3C8 27 4 22 4 15S8 3 16 2.500z" fill="#aec4de" stroke="#cfdff0" strokeWidth="1.500" />
        <path d="M4.500 13C5 6 9 2.500 16 2.500 24 2 27 4 31 4s7-2 15-1.500c6 .5 10 4 11.500 9" fill="none" stroke="#8ba4c2" />
        <path d="M21 16H10M15 11l-5 5 5 5M41 16h11M47 11l5 5-5 5" fill="none" stroke="#8c9db3" strokeWidth="2" />
      </svg>
      <div className="mt-[4px] flex h-[23px] w-[815px] shrink-0 items-center border border-[#9ab3cf] bg-[#eaf2fa] pl-[6px]">
        <ServerIcon />
        <svg width="4" height="8" className="ml-[7px]"><path d="M0 0 4 4 0 8z" /></svg>
        <span className="-mt-[2px] ml-[11px] w-[66px] tracking-[0.35px] text-[#222]">XIAOLONG</span>
        <svg width="4" height="8" className="ml-[12px]"><path d="M0 0 4 4 0 8z" /></svg>
      </div>
      <div className="ml-[7px] mt-[5px] flex items-center">
        <RefreshIcon />
        <Svg16 className="ml-[7px]"><rect x="0.500" y="0.500" width="15" height="15" rx="1" fill="#c7d0da" stroke="#a9b4c0" /><path d="M4 5l8 6M12 5l-8 6" stroke="#929eab" strokeWidth="2" /></Svg16>
        <Svg16 className="ml-[7px]"><path d="M0 8 8 0l8 8-2 .5V16H2V8.500z" fill="#bcc1c7" stroke="#989fa7" strokeWidth="0.900" /><path d="M3 1h3v4L3 6z" fill="#9aa1a9" /><rect x="9" y="9" width="4" height="7" fill="#9299a1" /><rect x="4" y="9" width="3" height="3" fill="#eef1f4" /></Svg16>
        <div className="ml-[9px] mr-[2px] h-[14px] w-px bg-white" />
        <HelpIcon />
        <span className="ml-[6px]"><Arrow /></span>
      </div>
    </div>
  );
}

function TreePanel() {
  return (
    <div className="flex h-[514px] w-[163px] shrink-0 flex-col border border-[#989898] bg-white">
      <div className="h-[25px] shrink-0 bg-[#bbb9bc] pl-[7px] font-bold leading-[25px]">连接</div>
      <div className="flex h-[25px] shrink-0 items-center border-b border-[#3f3f80] bg-linear-to-b from-[#fafafa] to-[#e4e2e3] pl-[3px]">
        <svg width="15" height="15"><path d="M.5 3.500h5l1-2h3l1 2h3v11H.5z" fill="#d6d6d6" stroke="#b3b3b3" /><path d="M2 12c0-4 2-6 5-6L6 3h7l-2 6-2-1c-2 0-4 2-5 4z" fill="#b2b2b2" /></svg>
        <div className="ml-[8px] h-[16px] w-[2px] bg-[#c9c7b9]" />
      </div>
      <div className="relative grow overflow-hidden whitespace-nowrap">
        <svg className="absolute left-0 top-0" width="80" height="100" fill="none" stroke="#777" strokeDasharray="1 2"><path d="M18 10.500h5M30.500 20v22M31 30.500h10M38 50.500h5M49.500 60v6M49.500 76v8M57 70.500h3M57 90.500h3" /></svg>
        <div className="flex h-5 items-center pl-[6px]">
          <Chevron d="M1 3 5 7 9 3" /><div className="ml-[4px] flex h-5 grow items-center bg-[#cce8ff] pl-[3px]"><ServerIcon /><span className="-mt-px ml-[4px] tracking-[0.2px]">XIAOLONG (XIAOLONG\Administrator)</span></div>
        </div>
        <div className="flex h-5 items-center pl-[42px]"><AppPoolIcon /><span className="-mt-px ml-[4px]">应用程序池</span></div>
        <div className="flex h-5 items-center pl-[25px]"><Chevron d="M1 3 5 7 9 3" /><span className="ml-[7px]"><SitesIcon /></span><span className="-mt-px ml-[4px]">网站</span></div>
        <div className="flex h-5 items-center pl-[43px]"><Chevron d="M3 1 7 5 3 9" c="#a5a5a5" /><Svg16 className="ml-[7px]"><Globe x={7.500} y={8} r={7} /><circle cx="11.500" cy="11" r="4" fill="#eaf2ff" stroke="#3b61b4" strokeWidth="0.800" /><path d="M10 10.200c0-2.200 3-2.200 3 0 0 1-1.500 1-1.500 2.200M11.500 13v1" stroke="#17379c" fill="none" /></Svg16><span className="-mt-px ml-[5px]">Default Web Site</span></div>
        <div className="flex h-5 items-center pl-[43px]"><Chevron d="M3 1 7 5 3 9" c="#a5a5a5" /><Svg16 className="ml-[7px]"><Globe x={7.500} y={8} r={7} /></Svg16><span className="-mt-px ml-[5px]">L</span></div>
      </div>
      <div className="flex h-[16px] shrink-0 items-center bg-[#f0f0f0] px-[3px]">
        <Chevron d="M7 1 3 5 7 9" /><div className="ml-[4px] h-[15px] w-[75px] bg-[#cdcdcd]" /><span className="ml-auto"><Chevron d="M3 1 7 5 3 9" /></span>
      </div>
    </div>
  );
}

type Item = [ReactNode, string, string?];
const netItems: Item[] = [
  [null, ""], [<IcError404 />, ".NET 错误页"], [<IcGlobeStand />, ".NET 全球化"], [<IcAuthRules />, ".NET 授权规", "则"],
  [<IcTrust />, ".NET 信任级", "别"], [<IcSmtp />, "SMTP 电子", "邮件"], [<IcConn />, "连接字符串"],
];
const ftpItems: Item[] = [
  [<IcFtpIp />, "FTP IP 地址", "和域限制"], [<IcFtpSsl />, "FTP SSL 设", "置"], [<IcFtpLogon />, "FTP 登录尝", "试限制"], [<IcFtpFirewall />, "FTP 防火墙", "支持"],
  [<IcFtpBrowse />, "FTP 目录浏", "览"], [<IcFtpFilter />, "FTP 请求筛", "选"], [<IcFtpLog />, "FTP 日志"],
];
const ftpItems2: Item[] = [
  [<IcFtpAuth />, "FTP 身份验", "证"], [<IcFtpKeys />, "FTP 授权规", "则"], [<IcFtpMsg />, "FTP 消息"], [<IcFtpUser />, "FTP 用户隔", "离"],
];
const iisItems: Item[] = [[<IcIis1 />, ""], [<IcIis2 />, ""], [<IcIis3 />, ""], [<IcIis4 />, ""], [<IcIis5 />, ""], [<IcIis6 />, ""], [<IcIis7 />, ""]];

function Row({ items }: { items: Item[] }) {
  return (
    <div className="flex h-[75px]">
      {items.map(([icon, a, b], i) => (
        <div key={i} className="flex w-[75px] shrink-0 flex-col">
          <div className="ml-[21px] h-[36px]">{icon}</div>
          <div className="-ml-px whitespace-nowrap text-center leading-[17px]">{a}{b ? <><br />{b}</> : null}</div>
        </div>
      ))}
    </div>
  );
}
function GroupHead({ label }: { label: string }) {
  return (
    <div className="flex h-[26px] items-center pb-[2px] pl-[12px]">
      <span className="text-[#1a4696]">{label}</span>
      <div className="ml-[5px] h-px grow bg-[#b4c2dd]" />
      <svg width="8" height="5" className="ml-[8px] mr-[10px]" fill="none" stroke="#12368f" strokeWidth="2.200"><path d="M.7 4.500 4 1.300 7.300 4.500" /></svg>
    </div>
  );
}

function CenterPanel() {
  return (
    <div className="ml-[6px] w-[632px] shrink-0">
      <div className="h-[486px] border border-[#989898] bg-white pl-[12px]">
        <div className="flex h-[52px] items-center">
          <svg width="33" height="34" viewBox="0 0 33 34" className="mt-[3px] overflow-visible">
            <Globe x={9.500} y={10} r={9.300} />
            <path d="M16 6l8-3 8 2v23l-8 5-8-4z" fill="url(#steel)" stroke="#8d9297" strokeWidth="0.700" /><path d="M16 6l8 2v25l-8-4z" fill="#d3d6d9" />
            <path d="M17 10l6 1.500M17 13l6 1.500M17 16l6 1.500M17 19l6 1.500M17 22l6 1.500" stroke="#8a8f94" /><circle cx="20.500" cy="29" r="1.300" fill="#6ee000" />
          </svg>
          <h1 className="-mt-px ml-[17px] text-[19.5px] leading-[26px] text-black">XIAOLONG 主页</h1>
        </div>
        <div className="flex h-[420px] w-[606px] flex-col border border-[#dcdcdc]">
          <div className="flex h-[31px] shrink-0 items-center whitespace-nowrap border-b border-[#3f3f80] bg-linear-to-b from-[#fafafa] to-[#e5e3e4]">
            <div className="flex h-[24px] w-[161px] items-center justify-end bg-white pr-[4px]"><Arrow /></div>
            <svg width="15" height="14" className="ml-[4px]"><path d="M0 1h14L9 7v6l-3-2V7z" fill="#b4b4b4" stroke="#a2a2a2" strokeWidth="0.800" /></svg>
            <span className="ml-[2px] w-[52px] tracking-[0.2px] text-[#8a8a8a]">开始(G)</span><Arrow dim />
            <svg width="17" height="16" className="ml-[5px]"><rect x="0.500" y="0.500" width="12" height="9" fill="#f4f6f8" stroke="#7b8896" /><rect x="5.500" y="6.500" width="10" height="9" fill="#fff" stroke="#7b8896" /><path d="M7 9h7M7 11h7M7 13h7" stroke="#6884b4" strokeDasharray="2 1" /><path d="M2 6c0 4 2 5 4 5v-2l4 3.500-4 3v-2C3 13.500 1 11 2 6z" fill="#2c9ad8" /></svg>
            <span className="ml-[2px] w-[73px] tracking-[0.1px]">全部显示(A)</span>
            <div className="mr-[5px] h-[19px] w-[2px] bg-[#c9c7b9]" />
            <span className="w-[57px]">分组依据:</span>
            <div className="flex h-[24px] w-[115px] items-center justify-between bg-white pl-[4px] pr-[3px]"><span>区域</span><Arrow /></div>
            <svg width="15" height="15" className="ml-[3px]"><rect x="0.500" y="0.500" width="14" height="14" fill="#f4f4f4" stroke="#777" /><path d="M1 2h13" stroke="#8fa0b4" strokeWidth="2" /><path d="M3 5h3v3H3zM9 5h3v3H9zM3 10h3v3H3zM9 10h3v3H9z" fill="#7a7f86" /></svg>
            <span className="ml-[3px]"><Arrow /></span>
          </div>
          <div className="flex min-h-0 grow">
            <div className="h-[387px] w-[588px] overflow-hidden">
              <div className="mt-[-2px]"><GroupHead label="ASP.NET" /></div>
              <Row items={netItems} />
              <Row items={[[null, ".NET 用户", "置"]]} />
              <GroupHead label="FTP" />
              <Row items={ftpItems} />
              <Row items={ftpItems2} />
              <GroupHead label="IIS" />
              <Row items={iisItems} />
            </div>
            <div className="flex h-[387px] w-[15px] flex-col items-center bg-[#f0f0f0]">
              <div className="flex h-[17px] items-center"><Chevron d="M1 7 5 3 9 7" /></div>
              <div className="h-[217px] w-full bg-[#cdcdcd]" />
              <div className="mt-auto flex h-[17px] items-center"><Chevron d="M1 3 5 7 9 3" /></div>
            </div>
          </div>
        </div>
      </div>
      <div className="flex h-[27px] items-center pl-[6px]">
        <div className="flex h-[21px] w-[76px] items-center border border-[#3c99f5] pl-px"><FeatureIcon /><span className="ml-[3px]">功能视图</span></div>
        <div className="flex items-center pl-[2px]"><FolderPagesIcon /><span className="ml-[3px]">内容视图</span></div>
      </div>
    </div>
  );
}

function Action({ icon, children, tone = "text-[#3796d6]" }: Kids & { icon?: ReactNode; tone?: string }) {
  return <div className={`flex h-5 items-center whitespace-nowrap pl-[5px] ${tone}`}><span className="w-[24px] shrink-0">{icon}</span>{children}</div>;
}
const Rule = () => <div className="flex h-[5px] items-center pl-[3px] pr-[3px]"><div className="h-px w-full bg-linear-to-r from-[#ddd] via-[#8d8d8d] via-15% to-[#8d8d8d]" /></div>;

function ActionsPanel() {
  return (
    <div className="ml-[6px] h-[514px] w-[200px] shrink-0 border border-[#989898] bg-linear-to-r from-[#fcfcfc] to-[#ebebeb]">
      <div className="mb-[4px] h-[25px] bg-[#bbb9bc] pl-[7px] font-bold leading-[25px]">操作</div>
      <Action tone="font-bold text-black">管理服务器</Action>
      <Action icon={<Svg16><path d="M2 6.500C3 2 8 1 10.500 2.500L11 0l2.500 5-5.500 2 .8-2.200C7 4.200 5 5 4.500 7zM14 9.500c-1 4.500-6 5.500-8.500 4L5 16l-2.500-5L8 9l-.8 2.200C9 11.800 11 11 11.500 9z" fill="#58cf48" stroke="#3aa532" strokeWidth="0.500" /></Svg16>}>重新启动</Action>
      <Action icon={<PlayIcon />} tone="text-[#9a9a9a]">启动</Action>
      <Action icon={<StopIcon />}>停止</Action>
      <Rule />
      <Action>查看应用程序池</Action>
      <Action>查看网站</Action>
      <Rule />
      <Action><span className="tracking-[0.2px]">更改 .NET Framework 版本</span></Action>
      <Rule />
      <Action icon={<Svg16><circle cx="6.500" cy="6" r="4.900" fill="#8a3a14" stroke="#3b1c0c" strokeWidth="0.800" /><circle cx="6.500" cy="5" r="2.800" fill="#d06c34" /><path d="M6.500 3v5M4.700 6.500l1.800 2 1.800-2" stroke="#fff" strokeWidth="1.200" fill="none" /></Svg16>}><span className="tracking-[0.15px]">获取新的 Web 平台组件</span></Action>
      <Rule />
      <Action icon={<HelpIcon />}>帮助</Action>
    </div>
  );
}

function IisWindow() {
  return (
    <div className="absolute left-[86px] top-[78px] flex h-[630px] w-[1010px] flex-col border border-[#9a9c9f] bg-[#f7f7f7] shadow-[0_4px_18px_3px_rgba(0,0,0,0.36)]">
      <div className="flex h-[30px] shrink-0 items-center justify-between bg-white pl-[7px]">
        <div className="-mt-[2px] flex items-center"><TitleIcon /><span className="ml-[5px] whitespace-nowrap tracking-[0.04px] text-black">Internet Information Services (IIS)管理器</span></div>
        <Caption color="#000" />
      </div>
      <NavBar />
      <div className="flex h-[26px] shrink-0 items-center bg-linear-to-b from-[#fcfcfc] to-[#e3e1e2] pb-[2px] pl-[13px] tracking-[0.15px]">
        <span className="w-[59px]">文件(F)</span><span className="w-[60px]">视图(V)</span><span>帮助(H)</span>
      </div>
      <div className="flex h-[516px] shrink-0"><TreePanel /><CenterPanel /><ActionsPanel /></div>
      <div className="flex h-[23px] shrink-0 items-center justify-between border-t border-[#fff] bg-linear-to-r from-[#e4e2e3] to-[#fcfcfc] pl-[4px] pr-[2px]">
        <span>就绪</span>
        <div className="flex items-start"><ServerIcon className="-mr-[2px] -mt-[2px]" /><svg width="11" height="12" className="mt-[4px]"><path d="M8 1h2v2H8zM4 5h2v2H4zM8 5h2v2H8zM0 9h2v2H0zM4 9h2v2H4zM8 9h2v2H8z" fill="#a9a9a9" /></svg></div>
      </div>
    </div>
  );
}

/* ---------- context menu ---------- */
function MenuItem({ icon, children, tone = "text-black" }: Kids & { icon?: ReactNode; tone?: string }) {
  return <div className={`flex h-[22px] items-center whitespace-nowrap pl-[4px] ${tone}`}><span className="w-[31px] shrink-0">{icon}</span><span className="-mt-[2px]">{children}</span></div>;
}
const MenuRule = () => <div className="flex h-[6px] items-center pl-[32px] pr-[2px]"><div className="h-px w-full bg-[#bfbcae]" /></div>;
function ContextMenu() {
  return (
    <div className="absolute left-[175px] top-[225px] h-[188px] w-[163px] border border-[#9b9b9b] bg-linear-to-r from-[#f0f0f0] from-[24px] to-[#fcfcfc] to-[24px] pt-px shadow-[2px_3px_2px_rgba(60,60,60,0.65)]">
      <MenuItem icon={<RefreshIcon />}>刷新(R)</MenuItem>
      <MenuRule />
      <MenuItem icon={<GlobeStarIcon />}>添加网站...</MenuItem>
      <MenuRule />
      <MenuItem icon={<PlayIcon />} tone="text-[#7f7f7f]">启动</MenuItem>
      <MenuItem icon={<StopIcon />}>停止</MenuItem>
      <MenuRule />
      <div className="mx-[2px] border-r border-[#3c99f5] bg-[#d6edff]"><div className="-ml-[2px]"><MenuItem icon={<GlobeStarIcon />}>添加 FTP 站点...</MenuItem></div></div>
      <MenuRule />
      <MenuItem>重命名</MenuItem>
      <MenuRule />
      <MenuItem icon={<FolderPagesIcon />}>切换到内容视图</MenuItem>
    </div>
  );
}

export default function App() {
  return (
    <div className="relative h-[768px] w-[1366px] overflow-hidden bg-[#001a36] font-['Noto_Sans','Noto_Sans_CJK_SC',sans-serif] text-[12px] leading-[17px] text-black [word-spacing:1px]">
      <Defs />
      <Desktop />
      <PanelWindow />
      <ExplorerWindow />
      <IisWindow />
      <ContextMenu />
      <div className="absolute left-[173px] top-[331px] h-[26px] w-[168px] rounded-[12px] border-[3px] border-[#f00]" />
      <div className="absolute left-[392px] top-[373px] whitespace-nowrap font-['Noto_Sans_CJK_SC',sans-serif] text-[19px] leading-[26px] tracking-[2px] text-[#1414ff]">右键添加站点</div>
    </div>
  );
}
